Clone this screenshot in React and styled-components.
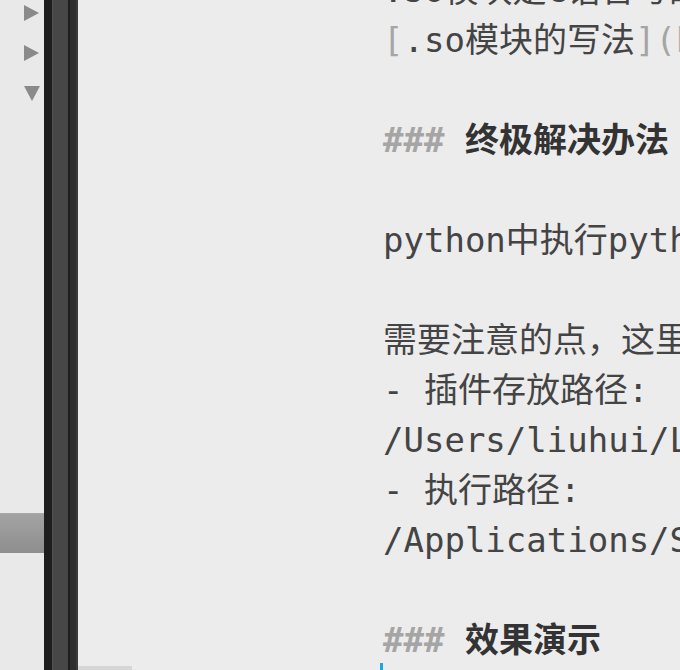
import React from 'react';
import styled, { createGlobalStyle } from 'styled-components';

const Global = createGlobalStyle`
  html, body { margin: 0; padding: 0; overflow: hidden; }
  body { background: #ececec; }
`;

const Window = styled.div`
  display: flex;
  width: 680px;
  height: 670px;
  overflow: hidden;
`;

// 左侧文件树
const Sidebar = styled.div`
  width: 44px;
  flex: none;
  background: #e9e9e9;
  padding-top: 0;
  overflow: hidden;
  display: flex;
  flex-direction: column;
  margin-top: -7px;
`;

const TreeRow = styled.div`
  height: 40px;
  flex: none;
  display: flex;
  align-items: center;
  padding-left: 24px;
  box-sizing: border-box;
  background: ${p => p.selected ? 'linear-gradient(#a9a9a9 0, #a9a9a9 1px, #a3a3a3 1px, #8e8e8e 100%)' : 'transparent'};
`;

const Arrow = styled.span`
  width: 0;
  height: 0;
  border-style: solid;
  border-color: transparent;
  ${p => p.open
    ? 'border-width: 15px 8px 0 8px; border-top-color: #8a8a8a;'
    : 'border-width: 8px 0 8px 15px; border-left-color: #8a8a8a;'}
`;

// 中间的分隔栏
const Splitter = styled.div`
  width: 34px;
  flex: none;
  background: linear-gradient(to right,
    #1e1e1e 0, #1e1e1e 8px,
    #525252 8px, #525252 9px,
    #474747 9px, #474747 24px,
    #1e1e1e 24px, #1e1e1e 26px,
    #2e2e2e 26px, #2e2e2e 32px,
    #3b3b3b 32px, #3b3b3b 34px);
`;

const Editor = styled.div`
  flex: 1;
  position: relative;
  background: #ececec;
  overflow: hidden;
  padding-left: 305px;
  box-sizing: border-box;
`;

const Lines = styled.div`
  margin-top: -35px;
  font-family: "DejaVu Sans Mono", "Noto Sans CJK SC", monospace;
  font-size: 34px;
  line-height: 50px;
  color: #444;
  white-space: pre;
`;

const Line = styled.div`
  height: 50px;
  font-weight: ${p => p.heading ? 'bold' : 'normal'};
  color: ${p => p.heading ? '#333' : '#444'};
`;

const Mark = styled.span`
  color: #a5a5a5;
`;

const Url = styled.span`
  color: #b0b0b0;
`;

const BottomTab = styled.div`
  position: absolute;
  left: 0;
  bottom: 0;
  width: 54px;
  height: 4px;
  background: #d6d6d6;
`;

const Caret = styled.div`
  position: absolute;
  left: 302px;
  bottom: 0;
  width: 3px;
  height: 7px;
  background: #1aa8e0;
`;

const rows = [
  { arrow: 'right' },
  { arrow: 'right' },
  { arrow: 'down' },
  ...Array.from({ length: 10 }, () => ({})),
  { selected: true },
  {}, {}, {},
];

export default function App() {
  return (
    <>
      <Global />
      <Window>
        <Sidebar>
          {rows.map((r, i) => (
            <TreeRow key={i} selected={r.selected}>
              {r.arrow && <Arrow open={r.arrow === 'down'} />}
            </TreeRow>
          ))}
        </Sidebar>
        <Splitter />
        <Editor>
          <Lines>
            <Line>.so模块是C语言写的</Line>
            <Line><Mark>[</Mark>.so模块的写法<Mark>](</Mark><Url>http://</Url></Line>
            <Line> </Line>
            <Line heading><Mark>###</Mark> 终极解决办法</Line>
            <Line> </Line>
            <Line>python中执行python</Line>
            <Line> </Line>
            <Line>需要注意的点，这里</Line>
            <Line>- 插件存放路径:</Line>
            <Line>/Users/liuhui/Library</Line>
            <Line>- 执行路径:</Line>
            <Line>/Applications/Sublime</Line>
            <Line> </Line>
            <Line heading><Mark>###</Mark> 效果演示</Line>
          </Lines>
          <BottomTab />
          <Caret />
        </Editor>
      </Window>
    </>
  );
}
